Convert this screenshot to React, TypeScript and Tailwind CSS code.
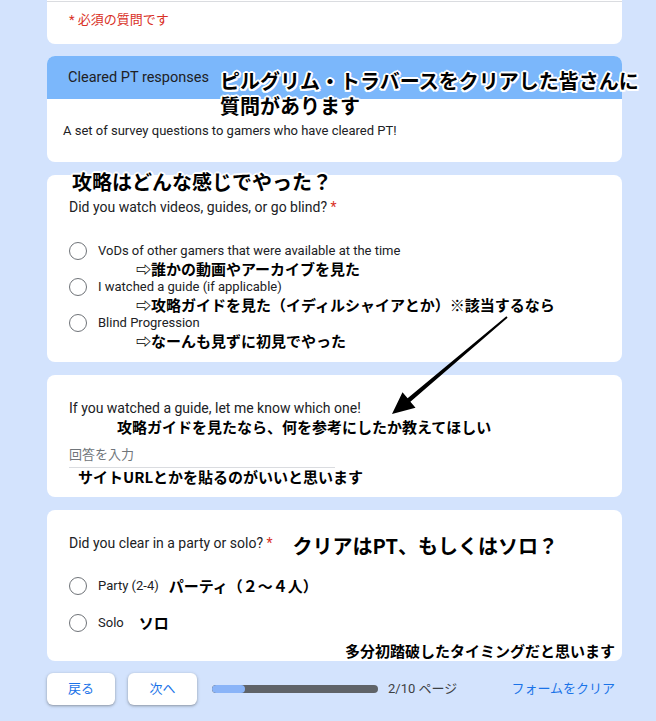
import React from "react";

// white halo around the hand-written overlay notes
const note =
  "font-['Noto_Sans_CJK_JP',sans-serif] font-bold text-black whitespace-nowrap [text-shadow:2px_0_#fff,-2px_0_#fff,0_2px_#fff,0_-2px_#fff,1.5px_1.5px_#fff,-1.5px_-1.5px_#fff,1.5px_-1.5px_#fff,-1.5px_1.5px_#fff]";

function Radio() {
  return <span className="w-[18px] h-[18px] shrink-0 rounded-full border-[1.5px] border-[#6f7378] bg-white" />;
}

function Option({ label, memo }: { label: string; memo: string }) {
  return (
    <>
      <div className="flex items-center h-[18px]">
        <Radio />
        <span className="ml-[11px] text-[13px] leading-[18px]">{label}</span>
      </div>
      <div className={`${note} h-[18px] pl-[67px] text-[15px] leading-[18px]`}>{memo}</div>
    </>
  );
}

function Footer() {
  return (
    <div className="mt-[12px] flex items-center h-[32px] text-[13px]">
      <button className="w-[68px] h-[32px] rounded-md bg-white text-[#1a73e8] shadow-[0_1px_2px_rgba(60,64,67,0.3),0_1px_3px_1px_rgba(60,64,67,0.15)]">
        戻る
      </button>
      <button className="ml-[13px] w-[69px] h-[32px] rounded-md bg-white text-[#1a73e8] shadow-[0_1px_2px_rgba(60,64,67,0.3),0_1px_3px_1px_rgba(60,64,67,0.15)]">
        次へ
      </button>
      <div className="ml-[15px] w-[166px] h-[8px] rounded-full bg-[#5f6368] overflow-hidden">
        <div className="w-[33px] h-full rounded-full bg-[#8ab4f8]" />
      </div>
      <span className="ml-[10px] text-[#3c4043]">2/10 ページ</span>
      <span className="ml-auto mr-[7px] text-[#1a73e8]">フォームをクリア</span>
    </div>
  );
}

export default function App() {
  return (
    <div className="relative w-[656px] h-[721px] overflow-hidden bg-[#d3e3fd] text-[#202124] font-[Roboto,'Noto_Sans_CJK_JP',sans-serif]">
      <div className="ml-[47px] w-[575px] flex flex-col">
        {/* required notice */}
        <div className="h-[44px] rounded-b-lg bg-white">
          <div className="mt-px h-px bg-[#dadce0]" />
          <p className="pl-[22px] pt-[8px] text-[13px] leading-[20px] text-[#d93025]">* 必須の質問です</p>
        </div>

        {/* section header */}
        <div className="relative mt-[12px] rounded-lg bg-white">
          <div className="h-[43px] rounded-t-lg bg-[#7bb7fb] flex items-center pl-[21px] text-[14.5px]">
            Cleared PT responses
          </div>
          <p className="pt-[22px] pb-[21px] pl-[16px] text-[13px] leading-[20px]">
            A set of survey questions to gamers who have cleared PT!
          </p>
          <div className={`${note} absolute left-[173px] top-[12px] text-[20px] leading-[25px]`}>
            ピルグリム・トラバースをクリアした皆さんに
            <br />
            質問があります
          </div>
        </div>

        {/* how did you play */}
        <div className="relative mt-[13px] rounded-lg bg-white pl-[22px] pt-[22px] pb-[12px]">
          <div className={`${note} absolute left-[25px] top-[-5px] text-[20px] leading-[24px]`}>
            攻略はどんな感じでやった？
          </div>
          <p className="text-[14px] leading-[20px]">
            Did you watch videos, guides, or go blind? <span className="text-[#d93025]">*</span>
          </p>
          <div className="mt-[25px] flex flex-col">
            <Option label="VoDs of other gamers that were available at the time" memo="⇨誰かの動画やアーカイブを見た" />
            <Option label="I watched a guide (if applicable)" memo="⇨攻略ガイドを見た（イディルシャイアとか）※該当するなら" />
            <Option label="Blind Progression" memo="⇨なーんも見ずに初見でやった" />
          </div>
        </div>

        {/* which guide */}
        <div className="mt-[13px] rounded-lg bg-white pl-[22px] pt-[23px] pb-[11px]">
          <p className="text-[14px] leading-[20px]">If you watched a guide, let me know which one!</p>
          <div className={`${note} h-[18px] pl-[48px] text-[15px] leading-[18px]`}>
            攻略ガイドを見たなら、何を参考にしたか教えてほしい
          </div>
          <p className="mt-[9px] text-[13px] leading-[20px] text-[#70757a]">回答を入力</p>
          <div className="mt-[2px] w-[266px] h-px bg-[#dadce0]" />
          <div className={`${note} h-[18px] pl-[9px] text-[15px] leading-[18px]`}>サイトURLとかを貼るのがいいと思います</div>
        </div>

        {/* party or solo */}
        <div className="mt-[13px] rounded-lg bg-white pl-[22px] pt-[21px] pb-px">
          <div className="flex items-start">
            <p className="mt-[2px] text-[14px] leading-[20px]">
              Did you clear in a party or solo? <span className="text-[#d93025]">*</span>
            </p>
            <span className={`${note} mt-[3px] ml-[20px] text-[20px] leading-[24px]`}>クリアはPT、もしくはソロ？</span>
          </div>
          <div className="mt-[16px] flex items-center h-[24px]">
            <Radio />
            <span className="ml-[11px] text-[13px]">Party (2-4)</span>
            <span className={`${note} ml-[10px] text-[15px]`}>パーティ（２～４人）</span>
          </div>
          <div className="mt-[13px] flex items-center h-[24px]">
            <Radio />
            <span className="ml-[11px] text-[13px]">Solo</span>
            <span className={`${note} ml-[15px] text-[15px]`}>ソロ</span>
          </div>
          <div className={`${note} mt-[7px] h-[18px] pr-[7px] text-right text-[15px] leading-[18px]`}>
            多分初踏破したタイミングだと思います
          </div>
        </div>

        <Footer />
      </div>

      {/* hand-drawn arrow */}
      <svg className="absolute left-0 top-0 pointer-events-none" width="656" height="721" viewBox="0 0 656 721">
        <path
          d="M507.6 317.8 L506.4 316.2 L407.6 398.3 L402.5 392.3 L392 414 L415.5 407.7 L410.4 401.7 Z"
          fill="#000"
        />
      </svg>
    </div>
  );
}
